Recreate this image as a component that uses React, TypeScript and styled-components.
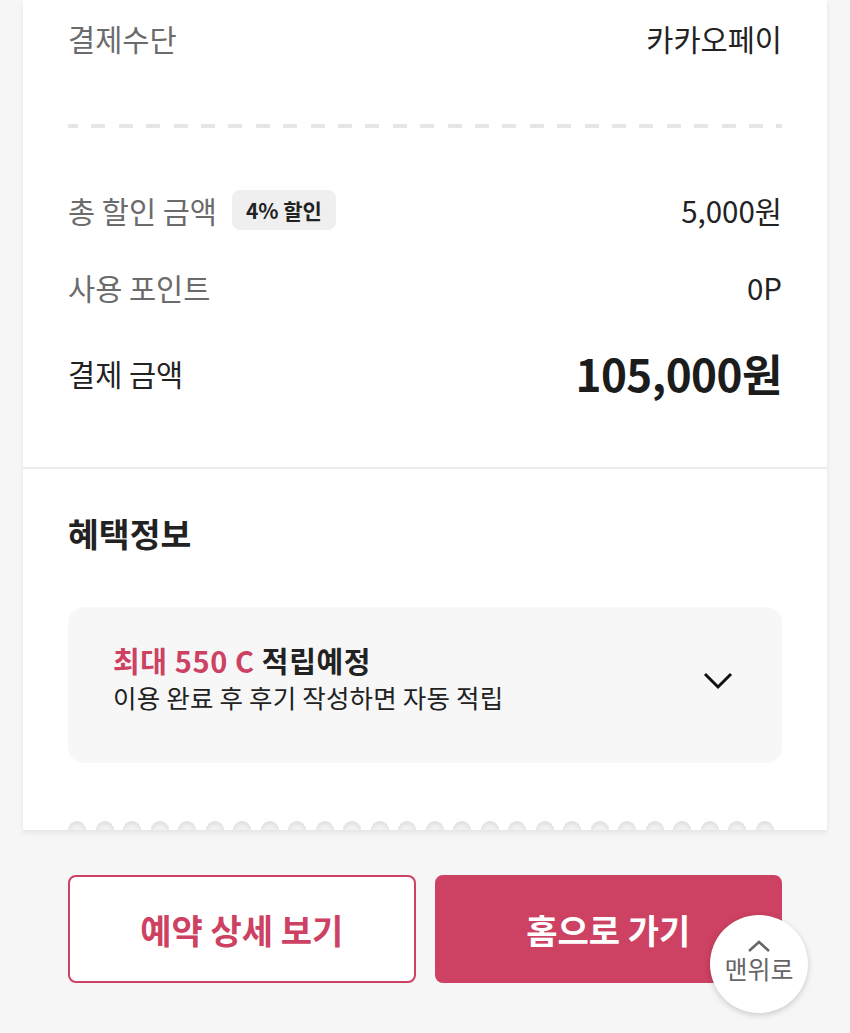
import styled, { createGlobalStyle } from 'styled-components';

const pink = '#cd4162';

const GlobalStyle = createGlobalStyle`
  html, body {
    margin: 0;
    padding: 0;
    background: #f6f6f6;
    font-family: 'Noto Sans CJK KR', 'Noto Sans', sans-serif;
    color: #222;
  }
  * {
    box-sizing: border-box;
  }
`;

const Page = styled.div`
  width: 850px;
  min-height: 1033px;
  padding: 0 23px;
  position: relative;
`;

const Card = styled.div`
  background: #fff;
  box-shadow: 0 3px 5px rgba(0, 0, 0, 0.07);
`;

const PaySection = styled.section`
  padding: 14px 45px 64px;
  border-bottom: 2px solid #ebebeb;
`;

const Row = styled.div<{ $gap?: number; $tall?: boolean }>`
  display: flex;
  justify-content: space-between;
  align-items: center;
  height: ${p => (p.$tall ? 60 : 48)}px;
  margin-top: ${p => p.$gap ?? 0}px;
`;

const LabelBox = styled.div`
  display: flex;
  align-items: center;
  gap: 15px;
`;

const Label = styled.span<{ $dark?: boolean }>`
  font-size: 29.5px;
  color: ${p => (p.$dark ? '#222' : '#6b6b6b')};
`;

const Value = styled.span`
  font-size: 29.5px;
  color: #222;
`;

const Total = styled.span`
  font-size: 44px;
  font-weight: 700;
  color: #1c1c1c;
  letter-spacing: -0.5px;
`;

const Badge = styled.span`
  display: inline-flex;
  align-items: center;
  height: 40px;
  padding: 0 14px;
  border-radius: 8px;
  background: #efefef;
  font-size: 21px;
  font-weight: 700;
  color: #222;
`;

const Dashed = styled.div`
  height: 4px;
  margin-top: 62px;
  background: repeating-linear-gradient(
    to right,
    #e6e6e6 0 14px,
    transparent 14px 27.4px
  );
  background-position: -4px 0;
`;

const BenefitSection = styled.section`
  padding: 42px 45px 0;
`;

const Heading = styled.h2`
  margin: 0;
  font-size: 33.5px;
  line-height: 44px;
  font-weight: 700;
  color: #222;
`;

const BenefitBox = styled.div`
  margin-top: 52px;
  height: 156px;
  border-radius: 16px;
  background: #f7f7f7;
  padding: 35px 49px 0 45px;
  display: flex;
  justify-content: space-between;
  align-items: flex-start;
`;

const BenefitText = styled.div`
  display: flex;
  flex-direction: column;
`;

const BenefitTitle = styled.div`
  font-size: 29px;
  line-height: 36px;
  font-weight: 700;
  color: #222;
  letter-spacing: 0.6px;

  em {
    font-style: normal;
    color: ${pink};
  }
`;

const BenefitSub = styled.div`
  margin-top: 2px;
  font-size: 25.5px;
  line-height: 34px;
  color: #222;
  letter-spacing: 0.2px;
`;

const Chevron = styled.svg`
  margin-top: 30px;
`;

const Scallops = styled.div`
  display: flex;
  gap: 9.5px;
  padding: 0 45px;
  margin-top: 58px;
  height: 9px;
  align-items: flex-end;
`;

const Notch = styled.span`
  width: 18px;
  height: 9px;
  border-radius: 9px 9px 0 0;
  background: #f2f2f2;
  box-shadow: inset 0 3px 4px rgba(0, 0, 0, 0.08);
`;

const Buttons = styled.div`
  display: grid;
  grid-template-columns: 1fr 1fr;
  gap: 19px;
  margin: 45px 45px 0;
`;

const Button = styled.button<{ $primary?: boolean }>`
  height: 108px;
  border-radius: 8px;
  border: 2px solid ${pink};
  background: ${p => (p.$primary ? pink : '#fff')};
  color: ${p => (p.$primary ? '#fff' : pink)};
  font-family: inherit;
  font-size: 34px;
  font-weight: 700;
  cursor: pointer;
`;

const TopButton = styled.button`
  position: absolute;
  left: 710px;
  top: 915px;
  width: 98px;
  height: 98px;
  border-radius: 50%;
  border: none;
  background: #fff;
  box-shadow: 0 2px 6px rgba(0, 0, 0, 0.18);
  display: flex;
  flex-direction: column;
  align-items: center;
  justify-content: center;
  gap: 0;
  font-family: inherit;
  font-size: 25px;
  line-height: 30px;
  color: #666;
  padding: 0 0 6px;
`;

export default function App() {
  const notches = Array.from({ length: 26 });

  return (
    <Page>
      <GlobalStyle />
      <Card>
        <PaySection>
          <Row>
            <Label>결제수단</Label>
            <Value>카카오페이</Value>
          </Row>
          <Dashed />
          <Row $gap={58}>
            <LabelBox>
              <Label>총 할인 금액</Label>
              <Badge>4% 할인</Badge>
            </LabelBox>
            <Value>5,000원</Value>
          </Row>
          <Row $gap={29}>
            <Label>사용 포인트</Label>
            <Value>0P</Value>
          </Row>
          <Row $gap={32} $tall>
            <Label $dark>결제 금액</Label>
            <Total>105,000원</Total>
          </Row>
        </PaySection>
        <BenefitSection>
          <Heading>혜택정보</Heading>
          <BenefitBox>
            <BenefitText>
              <BenefitTitle>
                <em>최대 550 C</em> 적립예정
              </BenefitTitle>
              <BenefitSub>이용 완료 후 후기 작성하면 자동 적립</BenefitSub>
            </BenefitText>
            <Chevron width="30" height="18" viewBox="0 0 30 18">
              <polyline points="2,2 15,15 28,2" fill="none" stroke="#111" strokeWidth="3" />
            </Chevron>
          </BenefitBox>
        </BenefitSection>
        <Scallops>
          {notches.map((_, i) => (
            <Notch key={i} />
          ))}
        </Scallops>
      </Card>
      <Buttons>
        <Button>예약 상세 보기</Button>
        <Button $primary>홈으로 가기</Button>
      </Buttons>
      <TopButton>
        <svg width="24" height="14" viewBox="0 0 24 14">
          <polyline points="2,12 12,3 22,12" fill="none" stroke="#666" strokeWidth="2.5" />
        </svg>
        맨위로
      </TopButton>
    </Page>
  );
}
